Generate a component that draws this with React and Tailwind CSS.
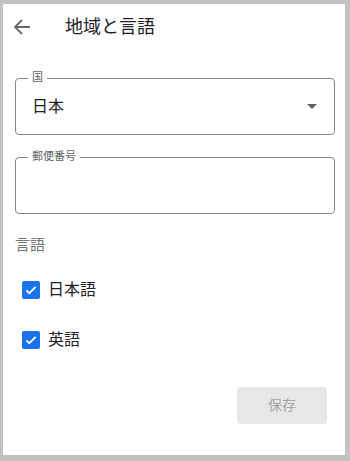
const Checkbox = ({ label }) => (
    <label className="flex items-center h-[50px] pl-[7px]">
        <span className="w-[18px] h-[18px] rounded-[2px] bg-[#1a73e8] flex items-center justify-center">
            <svg width="14" height="14" viewBox="0 0 24 24">
                <path d="M4 12.5l5 5L20 6.5" fill="none" stroke="white" strokeWidth="3" />
            </svg>
        </span>
        <span className="ml-[8px] text-[16px] text-[#202124]">{label}</span>
    </label>
);

const Field = ({ label, value, select }) => (
    <div className="relative border border-[#80868b] rounded-[4px] h-[57px] pl-[16px] pr-[17px] flex items-center justify-between">
        <span className="absolute -top-[8px] left-[12px] px-[4px] bg-white text-[11px] leading-[14px] text-[#5f6368]">
            {label}
        </span>
        <span className="text-[16px] text-[#202124]">{value}</span>
        {select && (
            <svg width="10" height="5" viewBox="0 0 10 5">
                <path d="M0 0h10L5 5z" fill="#5f6368" />
            </svg>
        )}
    </div>
);

export default function App() {
    return (
        <div
            className="w-[350px] h-[461px] bg-[#c2c2c2] pt-[4px] pl-[3px] pr-[5px] pb-[6px]"
            style={{ fontFamily: '"Roboto", "Noto Sans CJK JP", sans-serif' }}
        >
            <div className="bg-white h-full flex flex-col">
                <div className="flex items-center h-[46px] pl-[7px]">
                    <svg width="24" height="24" viewBox="0 0 24 24">
                        <path d="M20 12H5M12 5l-7 7 7 7" fill="none" stroke="#666" strokeWidth="1.8" />
                    </svg>
                    <h1 className="ml-[31px] text-[18px] leading-[24px] text-[#202124]">地域と言語</h1>
                </div>

                <div className="pl-[12px] pr-[10px] mt-[28px] flex flex-col gap-[22px]">
                    <Field label="国" value="日本" select />
                    <Field label="郵便番号" value="" />
                </div>

                <p className="px-[12px] mt-[20px] text-[15px] leading-[22px] text-[#757575]">言語</p>

                <div className="px-[12px] mt-[9px]">
                    <Checkbox label="日本語" />
                    <Checkbox label="英語" />
                </div>

                <div className="flex justify-end pr-[18px] mt-[22px]">
                    <button className="w-[90px] h-[37px] rounded-[4px] bg-[#e6e7e7] text-[14px] text-[#a6a6a6]">
                        保存
                    </button>
                </div>
            </div>
        </div>
    );
}
